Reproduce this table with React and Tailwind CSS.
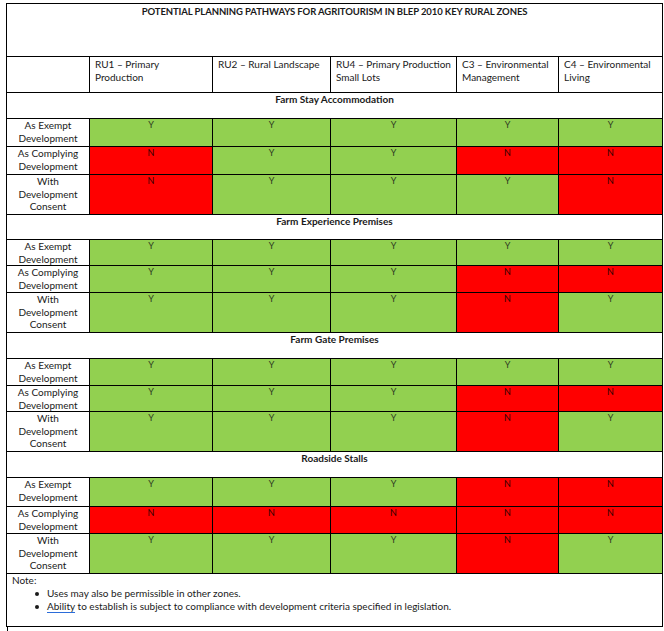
import React from "react";

const G = "bg-[#92d050]";
const R = "bg-[#ff0000]";

const sections = [
  {
    title: "Farm Stay Accommodation",
    h: [26, 28, 28, 40],
    rows: ["YYYYY", "NYYNN", "NYYYN"],
  },
  {
    title: "Farm Experience Premises",
    h: [25, 26, 27, 40],
    rows: ["YYYYY", "YYYNN", "YYYNY"],
  },
  {
    title: "Farm Gate Premises",
    h: [26, 27, 26, 40],
    rows: ["YYYYY", "YYYNN", "YYYNY"],
  },
  {
    title: "Roadside Stalls",
    h: [26, 29, 27, 40],
    rows: ["YYYNN", "NNNNN", "YYYNY"],
  },
];

const labels = [
  ["As Exempt", "Development"],
  ["As Complying", "Development"],
  ["With", "Development", "Consent"],
];

const headers = [
  ["RU1 – Primary", "Production"],
  ["RU2 – Rural Landscape"],
  ["RU4 – Primary Production", "Small Lots"],
  ["C3 – Environmental", "Management"],
  ["C4 – Environmental", "Living"],
];

const cell = "border border-black p-0 align-top";

export default function App() {
  return (
    <div className="bg-white w-[664px] h-[631px] overflow-hidden text-[#1a1a1a]" style={{ fontFamily: "Lato, 'Noto Sans', sans-serif" }}>
      <div className="pt-[3px] pl-[6px]">
        <table className="border-collapse table-fixed w-[656px] text-[10px] leading-[12.5px]">
          <colgroup>
            <col className="w-[83px]" />
            <col className="w-[123px]" />
            <col className="w-[118px]" />
            <col className="w-[126px]" />
            <col className="w-[102px]" />
            <col className="w-[104px]" />
          </colgroup>
          <tbody>
            <tr className="h-[53px]">
              <td colSpan={6} className={`${cell} text-center font-bold text-[9.5px] pt-[2px] tracking-[-0.1px]`}>
                POTENTIAL PLANNING PATHWAYS FOR AGRITOURISM IN BLEP 2010 KEY RURAL ZONES
              </td>
            </tr>
            <tr className="h-[36px]">
              <td className={cell}></td>
              {headers.map((h, i) => (
                <td key={i} className={`${cell} pl-[5px] pt-[1px] leading-[13px]`}>
                  {h.map((l, j) => (
                    <div key={j}>{l}</div>
                  ))}
                </td>
              ))}
            </tr>
            {sections.map((s, si) => (
              <React.Fragment key={si}>
                <tr style={{ height: s.h[0] }}>
                  <td colSpan={6} className={`${cell} text-center font-bold`}>
                    {s.title}
                  </td>
                </tr>
                {s.rows.map((r, ri) => (
                  <tr key={ri} style={{ height: s.h[ri + 1] }}>
                    <td className={`${cell} text-center`}>
                      {labels[ri].map((l, j) => (
                        <div key={j}>{l}</div>
                      ))}
                    </td>
                    {r.split("").map((v, ci) => (
                      <td
                        key={ci}
                        className={`${cell} ${v === "Y" ? G : R} text-center text-[9px] leading-[12px] ${v === "Y" ? "text-[#2f3a22]" : "text-[#300000]"}`}
                      >
                        {v}
                      </td>
                    ))}
                  </tr>
                ))}
              </React.Fragment>
            ))}
            <tr className="h-[53px]">
              <td colSpan={6} className={`${cell} pl-[5px] text-[10px] leading-[13px]`}>
                <div>Note:</div>
                <ul className="pl-[23px]">
                  <li className="flex items-center gap-[8px]">
                    <span className="w-[4px] h-[4px] rounded-full bg-[#1a1a1a] inline-block"></span>
                    <span>Uses may also be permissible in other zones.</span>
                  </li>
                  <li className="flex items-center gap-[8px]">
                    <span className="w-[4px] h-[4px] rounded-full bg-[#1a1a1a] inline-block"></span>
                    <span>
                      <span className="underline decoration-[#2b6cd9] underline-offset-2">Ability</span> to establish is subject to compliance with development criteria specified in legislation.
                    </span>
                  </li>
                </ul>
              </td>
            </tr>
          </tbody>
        </table>
        <div className="ml-[1px] w-[1px] h-[6px] bg-black"></div>
      </div>
    </div>
  );
}
